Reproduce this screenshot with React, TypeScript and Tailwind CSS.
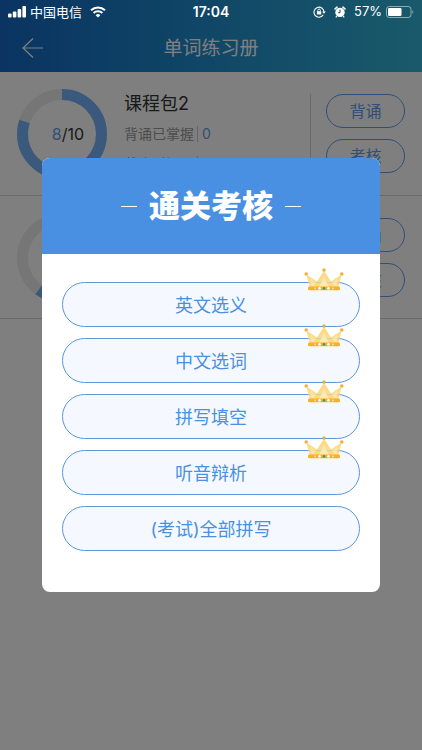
import React from "react";

type Course = {
  id: number;
  done: number;
  total: number;
  info?: { name: string; mastered: number; deadline: string };
};

const courses: Course[] = [
  { id: 2, done: 8, total: 10, info: { name: "课程包2", mastered: 0, deadline: "2021-11-05" } },
  { id: 1, done: 6, total: 10 },
];

const modes = [
  { label: "英文选义", crown: true },
  { label: "中文选词", crown: true },
  { label: "拼写填空", crown: true },
  { label: "听音辩析", crown: true },
  { label: "(考试)全部拼写", crown: false },
];

function StatusBar() {
  return (
    <div className="absolute inset-x-0 top-0 z-20 flex h-6 items-center px-2 text-white">
      <div className="flex flex-1 items-center">
        <svg width="18" height="12" viewBox="0 0 18 12" fill="currentColor" className="mr-1">
          <rect x="0" y="7.5" width="3.6" height="4" rx="1" />
          <rect x="4.8" y="5.5" width="3.6" height="6" rx="1" />
          <rect x="9.6" y="3" width="3.6" height="8.5" rx="1" />
          <rect x="14.4" y="0" width="3.6" height="11.5" rx="1" />
        </svg>
        <span className="text-[13px] leading-6">中国电信</span>
        <svg width="16" height="12" viewBox="0 0 16 12" fill="none" stroke="currentColor" className="ml-2">
          <path d="M1 4.2a10.2 10.2 0 0 1 14 0" strokeWidth="2" />
          <path d="M3.6 7a6.4 6.4 0 0 1 8.8 0" strokeWidth="2" />
          <path d="M8 11.6 5.6 9.2a3.4 3.4 0 0 1 4.8 0z" fill="currentColor" stroke="none" />
        </svg>
      </div>
      <span className="text-sm font-semibold">17:04</span>
      <div className="flex flex-1 items-center justify-end">
        <svg width="13" height="12" viewBox="0 0 13 12" fill="none" stroke="currentColor">
          <path d="M10.2 8.9A5 5 0 1 1 11 6" strokeWidth="1.1" />
          <path d="M9.2 5.4h3.6L11 7.8z" fill="currentColor" stroke="none" />
          <rect x="3.9" y="5.3" width="4.4" height="3.2" rx=".4" fill="currentColor" stroke="none" />
          <path d="M4.8 5.6V4.4a1.3 1.3 0 0 1 2.6 0v1.2" strokeWidth=".9" />
        </svg>
        <svg width="12" height="12" viewBox="0 0 12 12" className="ml-2">
          <circle cx="6" cy="6.4" r="4.7" fill="currentColor" />
          <path d="M1 3 3 1.2M11 3 9 1.2" stroke="currentColor" strokeWidth="1.6" strokeLinecap="round" />
          <path d="m2.8 10.2-1 1.2M9.2 10.2l1 1.2" stroke="currentColor" strokeWidth="1.2" />
          <path d="M6 3.6v3.1H4.2" fill="none" stroke="#14496a" strokeWidth="1" />
        </svg>
        <span className="ml-2 text-[13px]">57%</span>
        <svg width="28" height="12" viewBox="0 0 28 12" className="ml-1">
          <rect x=".5" y=".5" width="24.5" height="11" rx="2.8" fill="none" stroke="currentColor" strokeOpacity=".5" />
          <rect x="2" y="2" width="13.5" height="8" rx="1.2" fill="currentColor" />
          <path d="M26.4 4.2v3.6a2.2 2.2 0 0 0 0-3.6z" fill="currentColor" opacity=".5" />
        </svg>
      </div>
    </div>
  );
}

function Ring({ done, total, showCount }: { done: number; total: number; showCount: boolean }) {
  const c = 2 * Math.PI * 39.5;
  return (
    <div className="relative flex size-[90px] shrink-0 items-center justify-center">
      <svg viewBox="0 0 90 90" className="absolute inset-0 -rotate-90" fill="none" strokeWidth="11">
        <circle cx="45" cy="45" r="39.5" stroke="#ececec" />
        <circle cx="45" cy="45" r="39.5" stroke="#74b2f8" strokeDasharray={`${(c * done) / total} ${c}`} />
      </svg>
      {showCount && (
        <span className="relative pl-3 text-base text-[#333333]">
          <span className="text-[#5f9ef0]">{done}</span>/{total}
        </span>
      )}
    </div>
  );
}

function Crown() {
  return (
    <svg width="40" height="24" viewBox="0 0 40 24" className="pointer-events-none absolute -top-3.5 right-4">
      <path d="M2.5 6.5 13 13.5 20 2.5l7 11L37.5 6.5 34.5 19h-29z" fill="#fbd67a" opacity=".88" />
      <path d="M20 9l5 10H15z" fill="#fde9b4" />
      <path d="M6 10.500 12 15l-3 4H7.500zM34 10.500 28 15l3 4h1.500z" fill="#fde5a8" />
      <rect x="4" y="18.5" width="32" height="3.8" rx="1.5" fill="#f6b026" />
      <circle cx="2.2" cy="6" r="1.7" fill="#f2ad2c" />
      <circle cx="20" cy="2" r="1.7" fill="#f2ad2c" />
      <circle cx="37.8" cy="6" r="1.7" fill="#f2ad2c" />
      <circle cx="20" cy="20.4" r="1.3" fill="#2fa37c" />
      <circle cx="15.5" cy="20.4" r="1.3" fill="#fff" />
      <circle cx="24.5" cy="20.4" r="1.3" fill="#fff" />
      <circle cx="11" cy="20.4" r=".9" fill="#fde7ae" />
      <circle cx="29" cy="20.4" r=".9" fill="#fde7ae" />
    </svg>
  );
}

export default function App() {
  return (
    <div className="relative min-h-screen bg-white font-['Inter','Noto_Sans_CJK_SC',sans-serif]">
      <StatusBar />

      {/* Header */}
      <header className="flex h-[72px] items-center bg-linear-to-r from-[#1668c4] to-[#34b4d6] px-5 pt-6 text-white">
        <button aria-label="返回" className="flex w-6 justify-center">
          <svg width="21" height="20" viewBox="0 0 21 20" fill="none" stroke="currentColor" strokeWidth="1.2">
            <path d="M21 10H1M11 .5 1 10l10 9.5" />
          </svg>
        </button>
        <h1 className="flex-1 pt-0.5 text-center text-[19px] leading-6">单词练习册</h1>
        <span className="w-6" />
      </header>

      {/* Courses */}
      <main>
        {courses.map((course) => (
          <section key={course.id} className="flex border-b border-[#d4d4d4] px-[17px] pt-[22px] pb-[21px]">
            <div className="-my-2 flex items-center">
              <Ring done={course.done} total={course.total} showCount={!!course.info} />
            </div>
            <div className="ml-[17px] flex-1 text-[#999999]">
              {course.info && (
                <>
                  <h2 className="text-lg leading-5 text-[#333333]">{course.info.name}</h2>
                  <p className="mt-2.5 flex h-5 items-center text-sm">
                    <span className="w-[74px] border-r border-[#cccccc] leading-4">背诵已掌握</span>
                    <span className="ml-1 text-[#5f9ef0]">{course.info.mastered}</span>
                  </p>
                  <p className="mt-2.5 flex h-5 items-center text-sm">
                    <span className="w-[74px] border-r border-[#cccccc] leading-4">截止时间</span>
                    <span className="ml-1 text-[#5f9ef0]">{course.info.deadline}</span>
                  </p>
                </>
              )}
            </div>
            <div className="flex flex-col gap-[11px] border-l border-[#d4d4d4] pl-[15px]">
              <button className="h-[34px] w-[79px] rounded-full border border-[#5f9ef0] text-base text-[#5f9ef0]">背诵</button>
              <button className="h-[34px] w-[79px] rounded-full border border-[#5f9ef0] text-base text-[#5f9ef0]">考核</button>
            </div>
          </section>
        ))}
      </main>

      {/* Exam dialog */}
      <div className="absolute inset-0 z-10 flex items-center justify-center bg-black/50">
        <div role="dialog" aria-labelledby="exam-title" className="w-4/5 overflow-hidden rounded-lg bg-white">
          <div className="flex h-24 items-center justify-center gap-3 bg-[#4a90e2] text-white">
            <span className="h-px w-4 bg-white" />
            <h2 id="exam-title" className="text-[31px] leading-10 font-black">通关考核</h2>
            <span className="h-px w-4 bg-white" />
          </div>
          <div className="flex flex-col gap-[11px] px-5 pt-7 pb-[41px]">
            {modes.map((mode) => (
              <div key={mode.label} className="relative">
                <button className="block h-[45px] w-full rounded-full border border-[#5b97da] bg-[#f5f9ff] pt-0.5 text-lg text-[#4a90e2]">
                  {mode.label}
                </button>
                {mode.crown && <Crown />}
              </div>
            ))}
          </div>
        </div>
      </div>
    </div>
  );
}
